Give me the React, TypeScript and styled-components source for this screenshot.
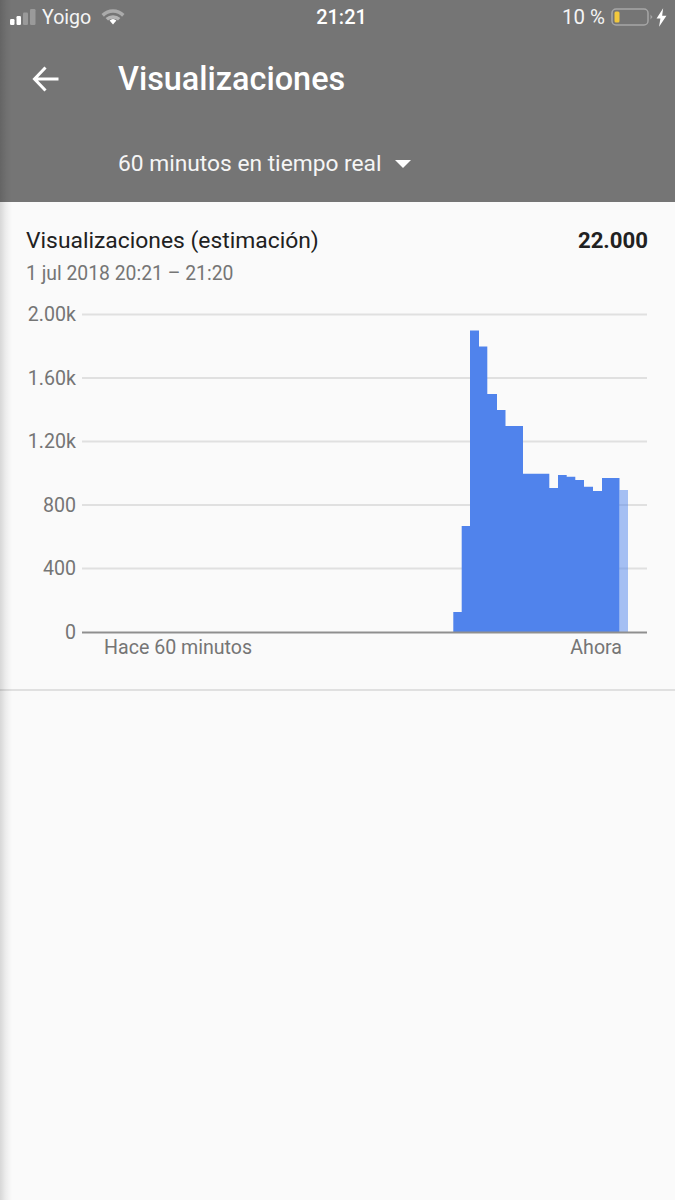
import styled, { createGlobalStyle } from 'styled-components';

const GlobalStyle = createGlobalStyle`
  html, body {
    margin: 0;
    padding: 0;
    background: #fafafa;
    font-family: Roboto, "Noto Sans", sans-serif;
  }
`;

const yLabels = ['2.00k', '1.60k', '1.20k', '800', '400', '0'];

// [right edge of the bar, top of the bar] measured off the chart, in page pixels
const bars: [number, number][] = [
  [461.7, 612],
  [470, 526],
  [479, 330.5],
  [487.3, 346.5],
  [497, 394],
  [505.5, 410],
  [523, 426],
  [549.3, 473.7],
  [558, 488],
  [566.7, 475],
  [575.3, 476.7],
  [584, 480],
  [593, 486.7],
  [602, 491],
  [619.5, 478],
];

const CHART_LEFT = 82;
const CHART_TOP = 308;
const BASE_Y = 632;
const gridYs = [314.5, 378, 441.5, 505, 568.5];

// one closed outline, so neighbouring bars leave no hairline between them
function barsPath() {
  let d = `M453.3 ${BASE_Y}`;
  for (const [right, top] of bars) {
    d += `V${top}H${right}`;
  }
  return `${d}V${BASE_Y}Z`;
}

export default function App() {
  return (
    <Page>
      <GlobalStyle />
      <EdgeShadow />
      <Header>
        <StatusBar>
          <StatusSide>
            <svg width="26" height="16" viewBox="0 0 26 16">
              <rect x="0" y="10" width="4.5" height="6" rx="1.2" fill="#fff" />
              <rect x="6.5" y="7" width="4.5" height="9" rx="1.2" fill="#fff" />
              <rect x="13" y="3.5" width="5" height="12.5" rx="1.2" fill="#9a9a9a" />
              <rect x="20" y="0" width="5.5" height="16" rx="1.2" fill="#9a9a9a" />
            </svg>
            <Carrier>Yoigo</Carrier>
            <svg width="24" height="16" viewBox="0 0 24 16">
              <path d="M12 15.5 8.6 11.6a5 5 0 0 1 6.8 0Z" fill="#fff" />
              <path d="M0.5 5a16.5 16.5 0 0 1 23 0l-2.4 2.7a12.6 12.6 0 0 0-18.2 0Z" fill="#ababab" />
              <path d="M4.6 9a11 11 0 0 1 14.8 0l-2.4 2.6a7.6 7.6 0 0 0-10 0Z" fill="#b4b4b4" />
            </svg>
          </StatusSide>
          <Clock>21:21</Clock>
          <BatterySide>
            <Percent>10 %</Percent>
            <svg width="42" height="18" viewBox="0 0 42 18">
              <rect x="1" y="1" width="36" height="16" rx="4" fill="none" stroke="#a6a6a6" stroke-width="1.5" />
              <rect x="3.5" y="3.5" width="5" height="11" rx="1.5" fill="#f2c83c" />
              <path d="M39.5 6.5 41.5 9 39.5 11.5Z" fill="#a6a6a6" />
            </svg>
            <svg width="11" height="19" viewBox="0 0 10 17">
              <path d="M6.5 0 0.5 9.5H4L2.8 17 9.5 6.8H5.6Z" fill="#fff" />
            </svg>
          </BatterySide>
        </StatusBar>
        <TitleRow>
          <BackIcon width="28" height="28" viewBox="0 0 28 28">
            <path d="M26.5 14H3M13.5 2.5 2.5 14l11 11.5" fill="none" stroke="#fff" stroke-width="3" />
          </BackIcon>
          <Title>Visualizaciones</Title>
        </TitleRow>
        <RangeRow>
          <RangeLabel>60 minutos en tiempo real</RangeLabel>
          <Caret />
        </RangeRow>
      </Header>

      <Card>
        <CardHead>
          <CardTitle>Visualizaciones (estimación)</CardTitle>
          <CardTotal>22.000</CardTotal>
        </CardHead>
        <DateRange>1 jul 2018 20:21 – 21:20</DateRange>
        <ChartWrap>
          <YAxis>
            {yLabels.map((label) => (
              <YLabel key={label}>{label}</YLabel>
            ))}
          </YAxis>
          <ChartBody>
            <svg width="565" height="327" viewBox={`${CHART_LEFT} ${CHART_TOP} 565 327`}>
              {gridYs.map((y) => (
                <line key={y} x1={CHART_LEFT} x2="647" y1={y} y2={y} stroke="#e0e0e0" stroke-width="2" />
              ))}
              <path d={barsPath()} fill="#5083ec" />
              <rect x="619.5" y="490" width="8.5" height="142" fill="#5083ec" opacity="0.5" />
              <line x1={CHART_LEFT} x2="647" y1="632.5" y2="632.5" stroke="#8f8f8f" stroke-width="2" />
            </svg>
            <XAxis>
              <XLabel>Hace 60 minutos</XLabel>
              <XLabel>Ahora</XLabel>
            </XAxis>
          </ChartBody>
        </ChartWrap>
      </Card>
    </Page>
  );
}

const Page = styled.div`
  position: relative;
  width: 675px;
  height: 1200px;
  overflow: hidden;
  background: #fafafa;
`;

const EdgeShadow = styled.div`
  position: absolute;
  left: 0;
  top: 0;
  bottom: 0;
  width: 12px;
  background: linear-gradient(to right, rgba(0, 0, 0, 0.14), rgba(0, 0, 0, 0.05) 50%, rgba(0, 0, 0, 0));
  pointer-events: none;
`;

const Header = styled.header`
  height: 202px;
  box-sizing: border-box;
  background: #757575;
  color: #fff;
  display: flex;
  flex-direction: column;
`;

const StatusBar = styled.div`
  height: 34px;
  display: grid;
  grid-template-columns: 1fr auto 1fr;
  align-items: center;
  padding: 0 8px 0 10px;
`;

const StatusSide = styled.div`
  display: flex;
  align-items: center;
  gap: 6px;
`;

const Carrier = styled.span`
  font-size: 19.6px;
  margin-right: 4px;
  color: #f4f4f4;
`;

const Clock = styled.span`
  margin-left: 6px;
  font-size: 20px;
  font-weight: 500;
`;

const BatterySide = styled.div`
  display: flex;
  align-items: center;
  justify-content: flex-end;
  gap: 3px;
`;

const Percent = styled.span`
  font-size: 20.4px;
  margin-right: 3px;
  color: #f4f4f4;
`;

const TitleRow = styled.div`
  display: flex;
  align-items: center;
  height: 46px;
  margin-top: 22px;
  padding-left: 32px;
`;

const BackIcon = styled.svg`
  flex: none;
  margin-right: 58px;
`;

const Title = styled.h1`
  margin: 0;
  font-size: 32.4px;
  font-weight: 500;
`;

const RangeRow = styled.div`
  display: flex;
  align-items: center;
  gap: 13px;
  margin-top: 48px;
  padding-left: 118px;
`;

const RangeLabel = styled.span`
  font-size: 22.75px;
  color: #f5f5f5;
`;

const Caret = styled.span`
  width: 0;
  height: 0;
  border-left: 8px solid transparent;
  border-right: 8px solid transparent;
  border-top: 8px solid #fff;
`;

const Card = styled.section`
  height: 489px;
  box-sizing: border-box;
  padding: 24px 27px 0 26px;
  border-bottom: 2px solid #e0e0e0;
`;

const CardHead = styled.div`
  display: flex;
  justify-content: space-between;
  align-items: center;
  height: 28px;
`;

const CardTitle = styled.span`
  font-size: 22.85px;
  color: #212121;
`;

const CardTotal = styled.span`
  font-size: 22.2px;
  font-weight: 700;
  color: #212121;
`;

const DateRange = styled.div`
  margin-top: 8px;
  font-size: 19.35px;
  line-height: 24px;
  color: #757575;
`;

const ChartWrap = styled.div`
  display: flex;
  margin-top: 22px;
  margin-right: -1px;
`;

const YAxis = styled.div`
  width: 50px;
  height: 341px;
  margin-right: 6px;
  margin-top: -5px;
  display: flex;
  flex-direction: column;
  justify-content: space-between;
  align-items: flex-end;
`;

const YLabel = styled.span`
  font-size: 19.6px;
  line-height: 23px;
  color: #757575;
`;

const ChartBody = styled.div`
  display: flex;
  flex-direction: column;
  width: 565px;

  svg {
    display: block;
  }
`;

const XAxis = styled.div`
  display: flex;
  justify-content: space-between;
  margin-top: 1px;
  padding: 0 25px 0 22px;
`;

const XLabel = styled.span`
  font-size: 19.6px;
  line-height: 23px;
  color: #757575;
`;
